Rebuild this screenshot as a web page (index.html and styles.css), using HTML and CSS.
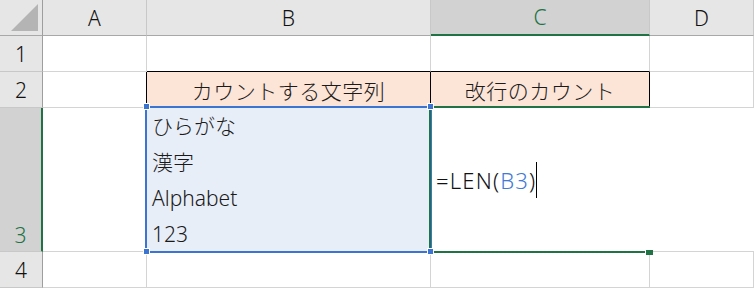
FILE: index.html
```html
<!DOCTYPE html>
<html lang="ja">
<head>
<meta charset="utf-8">
<title>Sheet</title>
<link rel="stylesheet" href="styles.css">
</head>
<body>
<div class="sheet">
  <div class="corner"><div class="tri"></div></div>
  <div class="ch">A</div>
  <div class="ch">B</div>
  <div class="ch sel">C</div>
  <div class="ch">D</div>

  <div class="rh">1</div>
  <div class="c"></div>
  <div class="c above"></div>
  <div class="c above"></div>
  <div class="c"></div>

  <div class="rh">2</div>
  <div class="c before"></div>
  <div class="c hdr">カウントする文字列</div>
  <div class="c hdr">改行のカウント</div>
  <div class="c"></div>

  <div class="rh sel-row">3</div>
  <div class="c"></div>
  <div class="c b3">
    <span class="line">ひらがな</span>
    <span class="line">漢字</span>
    <span class="line">Alphabet</span>
    <span class="line">123</span>
  </div>
  <div class="c c3"><span class="formula">=LEN(<span class="ref">B3</span>)</span><span class="caret"></span></div>
  <div class="c d3"></div>

  <div class="rh">4</div>
  <div class="c"></div>
  <div class="c"></div>
  <div class="c"></div>
  <div class="c"></div>

  <div class="range-box"></div>
  <div class="active-box"></div>
  <div class="handle h-tl"></div>
  <div class="handle h-tr"></div>
  <div class="handle h-bl"></div>
  <div class="handle h-br"></div>
  <div class="fill-handle"></div>
</div>
</body>
</html>
```

FILE: styles.css
```css
html, body {
  margin: 0;
  padding: 0;
  background: #ffffff;
  overflow: hidden;
}

.sheet {
  position: relative;
  display: grid;
  grid-template-columns: 43px 104px 284px 219px 104px;
  grid-template-rows: 36px 36px 36px 144px 36px;
  width: 754px;
  height: 288px;
  font-family: "Noto Sans", "Noto Sans CJK JP", sans-serif;
  font-size: 21px;
  font-weight: 300;
  color: #1a1a1a;
}

.sheet > div {
  box-sizing: border-box;
}

.corner {
  background: #e6e6e6;
  border-right: 1px solid #9e9e9e;
  border-bottom: 1px solid #a8a8a8;
  display: flex;
  justify-content: flex-end;
  align-items: flex-end;
  padding: 0 4px 4px 0;
}

.tri {
  width: 27px;
  height: 27px;
  background: #b4b4b4;
  clip-path: polygon(100% 0, 100% 100%, 0 100%);
}

.ch {
  background: #e6e6e6;
  border-right: 1px solid #c8c8c8;
  border-bottom: 1px solid #a8a8a8;
  display: flex;
  align-items: center;
  justify-content: center;
  font-size: 21px;
  color: #111;
}

.ch.sel {
  background: #d2d2d2;
  color: #217346;
  border-bottom: 2px solid #217346;
}

.rh {
  background: #e6e6e6;
  border-right: 1px solid #9e9e9e;
  border-bottom: 1px solid #c8c8c8;
  display: flex;
  align-items: center;
  justify-content: center;
  font-size: 21px;
  color: #111;
}

.rh.sel-row {
  background: #d2d2d2;
  color: #217346;
  border-right: 2px solid #217346;
  align-items: flex-end;
  padding-bottom: 2px;
}

.c {
  border-right: 1px solid #d4d4d4;
  border-bottom: 1px solid #d4d4d4;
}

.c.above {
  border-bottom-color: #000;
}

.c.before {
  border-right-color: #000;
}

.c.hdr {
  background: #fce4d6;
  border-right-color: #000;
  display: flex;
  align-items: center;
  justify-content: center;
  letter-spacing: 0.5px;
}

.c.b3 {
  background: #e8eef8;
  display: flex;
  flex-direction: column;
  padding-left: 5px;
}

.line {
  height: 36px;
  line-height: 36px;
  white-space: nowrap;
}

.c.c3 {
  border-right: none;
  display: flex;
  align-items: center;
  padding-left: 5px;
}

.formula {
  font-size: 22px;
  letter-spacing: 1.2px;
  color: #111;
}

.ref {
  color: #3f7ad6;
}

.caret {
  display: inline-block;
  width: 1px;
  height: 36px;
  background: #000;
  margin-left: 0;
}

.c.d3 {
  border-right: none;
}

.range-box {
  position: absolute;
  left: 145px;
  top: 106px;
  width: 287px;
  height: 147px;
  border: 2px solid #3c74d2;
  box-sizing: border-box;
}

.active-box {
  position: absolute;
  left: 429px;
  top: 106px;
  width: 221px;
  height: 147px;
  border: 2px solid #217346;
  border-right: none;
  box-sizing: border-box;
}

.handle {
  position: absolute;
  width: 7px;
  height: 7px;
  background: #3c74d2;
  border: 1px solid #ffffff;
  box-sizing: border-box;
}

.h-tl { left: 143px; top: 103px; }
.h-tr { left: 427px; top: 103px; }
.h-bl { left: 143px; top: 248px; }
.h-br { left: 427px; top: 248px; }

.fill-handle {
  position: absolute;
  left: 645px;
  top: 249px;
  width: 8px;
  height: 6px;
  background: #217346;
  border-left: 1px solid #ffffff;
  border-top: 1px solid #ffffff;
  box-sizing: border-box;
}
```
